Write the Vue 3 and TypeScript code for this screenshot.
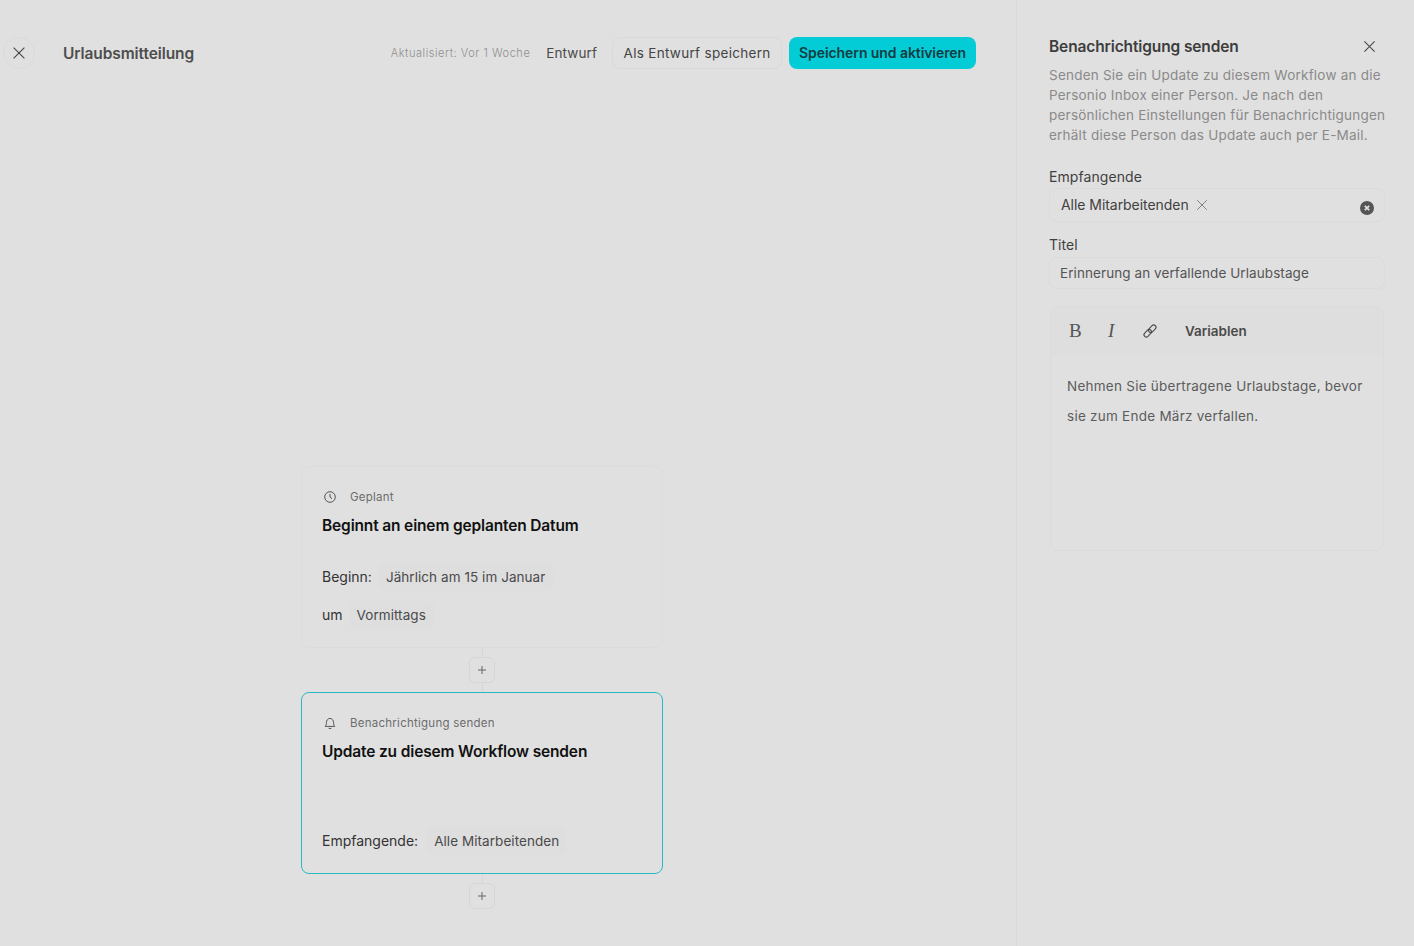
<script setup lang="ts">
const closeIcon = "M4 4l12 12M16 4L4 16";
</script>

<template>
  <div class="page">
    <main class="main">
      <header class="header">
        <button class="round">
          <svg width="18" height="18" viewBox="0 0 20 20"><path :d="closeIcon" fill="none" stroke="#444" stroke-width="1.2" /></svg>
        </button>
        <h1 class="name">Urlaubsmitteilung</h1>
        <div class="spacer"></div>
        <span class="updated">Aktualisiert: Vor 1 Woche</span>
        <span class="status">Entwurf</span>
        <button class="btn">Als Entwurf speichern</button>
        <button class="btn primary">Speichern und aktivieren</button>
      </header>

      <section class="canvas">
        <article class="card">
          <div class="kind">
            <svg class="kind-icon" width="14" height="14" viewBox="0 0 14 14" fill="none" stroke="#555" stroke-width="1">
              <circle cx="7" cy="7" r="5.3" />
              <path d="M7 3.9V7l2 1.7" />
            </svg>
            <span>Geplant</span>
          </div>
          <h2 class="title">Beginnt an einem geplanten Datum</h2>
          <div class="rows">
            <div class="row"><span class="lab">Beginn:</span><span class="chip">Jährlich am 15 im Januar</span></div>
            <div class="row"><span class="lab">um</span><span class="chip">Vormittags</span></div>
          </div>
        </article>

        <div class="link">
          <button class="plus">
            <svg width="10" height="10" viewBox="0 0 10 10"><path d="M5 1v8M1 5h8" stroke="#666" stroke-width="1" fill="none" /></svg>
          </button>
        </div>

        <article class="card active">
          <div class="kind">
            <svg class="kind-icon" width="14" height="14" viewBox="0 0 14 14" fill="none" stroke="#555" stroke-width="1">
              <path d="M2.2 10.4h9.6c-.9-1-1.2-1.900-1.200-3.700 0-2.300-1.500-4.300-3.600-4.300S3.400 4.400 3.400 6.700c0 1.800-.3 2.700-1.200 3.700z" />
              <path d="M5.600 12.200c.6.500 2.200.500 2.800 0" />
            </svg>
            <span>Benachrichtigung senden</span>
          </div>
          <h2 class="title">Update zu diesem Workflow senden</h2>
          <div class="rows rows-end">
            <div class="row row-wide"><span class="lab">Empfangende:</span><span class="chip">Alle Mitarbeitenden</span></div>
          </div>
        </article>

        <div class="link last">
          <button class="plus">
            <svg width="10" height="10" viewBox="0 0 10 10"><path d="M5 1v8M1 5h8" stroke="#666" stroke-width="1" fill="none" /></svg>
          </button>
        </div>
      </section>
    </main>

    <aside class="panel">
      <div class="panel-head">
        <h2 class="panel-title">Benachrichtigung senden</h2>
        <svg width="17" height="17" viewBox="0 0 20 20"><path :d="closeIcon" fill="none" stroke="#444" stroke-width="1.200" /></svg>
      </div>
      <p class="desc">Senden Sie ein Update zu diesem Workflow an die Personio Inbox einer Person. Je nach den persönlichen Einstellungen für Benachrichtigungen erhält diese Person das Update auch per E-Mail.</p>

      <label class="label first">Empfangende</label>
      <div class="field select">
        <span class="tag">Alle Mitarbeitenden</span>
        <svg class="tag-x" width="12" height="12" viewBox="0 0 20 20"><path d="M2 2l16 16M18 2L2 18" fill="none" stroke="#777" stroke-width="1.500" /></svg>
        <svg class="clear" width="14" height="14" viewBox="0 0 14 14">
          <circle cx="7" cy="7" r="7" fill="#555" />
          <path d="M4.800 4.800l4.400 4.400M9.200 4.800l-4.400 4.400" stroke="#e0e0e0" stroke-width="1.700" />
        </svg>
      </div>

      <label class="label second">Titel</label>
      <div class="field input">Erinnerung an verfallende Urlaubstage</div>

      <div class="editor">
        <div class="toolbar">
          <span class="tool bold">B</span>
          <span class="tool italic">I</span>
          <svg class="tool-link" width="16" height="16" viewBox="0 0 16 16" fill="none" stroke="#4a4a4a" stroke-width="1.100">
            <g transform="rotate(-45 8 8)">
              <rect x="0.500" y="5.700" width="8.600" height="4.600" rx="2.300" />
              <rect x="6.900" y="5.700" width="8.600" height="4.600" rx="2.300" />
            </g>
          </svg>
          <span class="vars">Variablen</span>
        </div>
        <p class="body">Nehmen Sie übertragene Urlaubstage, bevor sie zum Ende März verfallen.</p>
      </div>
    </aside>
  </div>
</template>

<style>
html, body { margin: 0; background: #e0e0e0; }
</style>

<style scoped>
.page {
  display: flex;
  width: 1414px;
  height: 946px;
  overflow: hidden;
  background: #e0e0e0;
  font-family: Inter, "Liberation Sans", sans-serif;
  color: #444;
}
.main { width: 1016px; flex: none; }
.header {
  display: flex;
  align-items: center;
  height: 32px;
  padding: 37px 40px 0 3px;
}
.round {
  width: 32px;
  height: 32px;
  padding: 0;
  display: flex;
  align-items: center;
  justify-content: center;
  border: 1px solid #dbdbdb;
  border-radius: 50%;
  background: #e0e0e0;
}
.name {
  margin: 2px 0 0 28px;
  font-size: 15.5px;
  font-weight: 600;
  letter-spacing: -0.1px;
  color: #4e4e4e;
  line-height: 20px;
}
.spacer { flex: 1; }
.updated { font-size: 11px; font-weight: 300; letter-spacing: 0.55px; color: #8f8f8f; }
.status { margin: 0 15px 0 16px; font-size: 13.5px; color: #4a4a4a; letter-spacing: 0.1px; }
.btn {
  height: 32px;
  padding: 0 10.5px 1px;
  border: 1px solid #d9d9d9;
  border-radius: 8px;
  background: #e0e0e0;
  font: 400 13.5px Inter, "Liberation Sans", sans-serif;
  letter-spacing: 0.3px;
  color: #444;
}
.primary {
  margin-left: 7px;
  padding: 0 10px 1px;
  border: none;
  background: #04ccd6;
  font: 600 14px Inter, "Liberation Sans", sans-serif;
  letter-spacing: -0.08px;
  color: #123c42;
}
.canvas {
  display: flex;
  flex-direction: column;
  width: 362px;
  margin: 397px 0 0 301px;
}
.card {
  box-sizing: border-box;
  display: flex;
  flex-direction: column;
  height: 182px;
  padding: 22px 20px 0;
  border: 1px solid #dcdcdc;
  border-radius: 8px;
}
.active { border-color: #2ab9c2; }
.kind {
  display: flex;
  align-items: center;
  gap: 13px;
  height: 16px;
  font-size: 11.5px;
  letter-spacing: 0.25px;
  color: #6d6d6d;
}
.kind-icon { margin-left: 1px; }
.title {
  margin: 11px 0 0;
  font-size: 15.500px;
  font-weight: 600;
  letter-spacing: -0.15px;
  line-height: 20px;
  color: #111;
}
.rows { display: flex; flex-direction: column; gap: 10px; margin-top: 27px; }
.rows-end { margin-top: 65px; }
.row {
  display: flex;
  align-items: center;
  gap: 6px;
  height: 28px;
  font-size: 14px;
  color: #333;
}
.lab { margin-top: -2px; }
.row-wide { gap: 8px; }
.chip {
  display: flex;
  align-items: center;
  height: 28px;
  padding: 0 8px;
  border-radius: 6px;
  background: #dedede;
  font-size: 13.5px;
  letter-spacing: 0.06px;
  color: #4a4a4a;
}
.link {
  position: relative;
  display: flex;
  align-items: center;
  justify-content: center;
  height: 44px;
}
.link::before {
  content: "";
  position: absolute;
  left: 181px;
  top: 0;
  bottom: 0;
  width: 1px;
  background: #d6d6d6;
}
.last::before { bottom: 18px; }
.plus {
  position: relative;
  width: 26px;
  height: 26px;
  padding: 0;
  display: flex;
  align-items: center;
  justify-content: center;
  border: 1px solid #d6d6d6;
  border-radius: 6px;
  background: #e0e0e0;
}
.panel {
  box-sizing: border-box;
  width: 398px;
  padding: 36px 29px 0 32px;
  border-left: 1px solid #dadada;
}
.panel-head {
  display: flex;
  justify-content: space-between;
  align-items: center;
  height: 20px;
  padding-right: 7.5px;
}
.panel-title { margin: 0; font-size: 15.5px; font-weight: 600; letter-spacing: -0.12px; color: #3d3d3d; }
.desc {
  margin: 9px -3px 0 0;
  font-size: 13.5px;
  line-height: 20px;
  letter-spacing: 0.22px;
  color: #8a8a8a;
}
.label { display: block; font-size: 14px; line-height: 18px; color: #3f3f3f; letter-spacing: 0.08px; }
.first { margin-top: 23px; }
.second { margin-top: 14px; }
.field {
  box-sizing: border-box;
  display: flex;
  align-items: center;
  border: 1px solid #dbdbdb;
  border-radius: 8px;
  font-size: 14px;
  color: #4d4d4d;
}
.select { position: relative; height: 34px; margin-top: 2px; padding: 0 11px 2px; color: #414141; letter-spacing: -0.05px; }
.tag-x { margin: 1px 0 0 7px; }
.clear { position: absolute; right: 10px; top: 12px; }
.input { height: 32px; margin-top: 3px; padding: 0 10px; font-size: 13.5px; color: #555; letter-spacing: 0.08px; }
.editor {
  box-sizing: border-box;
  width: 334px;
  height: 245px;
  margin: 17px 0 0 1px;
  border: 1px solid #dbdbdb;
  border-radius: 8px;
}
.toolbar {
  display: flex;
  align-items: center;
  box-sizing: border-box;
  height: 49px;
  padding: 0 0 1px 17px;
  background: #dedede;
  margin: 0 1px;
  border-radius: 8px 8px 0 0;
  color: #4a4a4a;
}
.tool { width: 13px; font-size: 19px; line-height: 20px; font-family: "Liberation Serif", serif; color: #555; }
.italic { margin-left: 26px; font-style: italic; }
.tool-link { margin-left: 21px; }
.vars { margin-left: 27px; font-size: 13.5px; font-weight: 600; color: #4a4a4a; }
.body {
  margin: 15px 14px 0 16px;
  font-size: 13.5px;
  line-height: 30px;
  letter-spacing: 0.25px;
  color: #5c5c5c;
}
</style>
